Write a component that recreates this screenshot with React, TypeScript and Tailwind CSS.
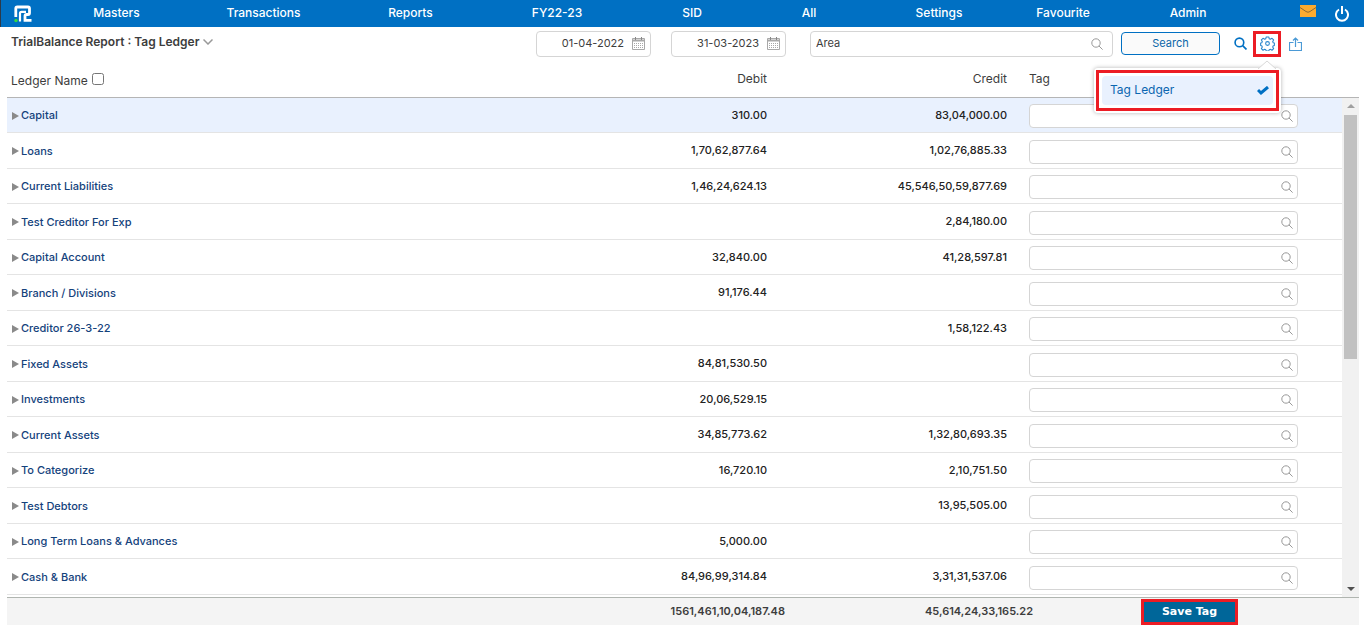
import { ReactNode, useState } from "react";

type Ledger = { name: string; debit?: string; credit?: string };

const menu = [
  "Masters",
  "Transactions",
  "Reports",
  "FY22-23",
  "SID",
  "All",
  "Settings",
  "Favourite",
  "Admin",
];

const ledgers: Ledger[] = [
  { name: "Capital", debit: "310.00", credit: "83,04,000.00" },
  { name: "Loans", debit: "1,70,62,877.64", credit: "1,02,76,885.33" },
  { name: "Current Liabilities", debit: "1,46,24,624.13", credit: "45,546,50,59,877.69" },
  { name: "Test Creditor For Exp", credit: "2,84,180.00" },
  { name: "Capital Account", debit: "32,840.00", credit: "41,28,597.81" },
  { name: "Branch / Divisions", debit: "91,176.44" },
  { name: "Creditor 26-3-22", credit: "1,58,122.43" },
  { name: "Fixed Assets", debit: "84,81,530.50" },
  { name: "Investments", debit: "20,06,529.15" },
  { name: "Current Assets", debit: "34,85,773.62", credit: "1,32,80,693.35" },
  { name: "To Categorize", debit: "16,720.10", credit: "2,10,751.50" },
  { name: "Test Debtors", credit: "13,95,505.00" },
  { name: "Long Term Loans & Advances", debit: "5,000.00" },
  { name: "Cash & Bank", debit: "84,96,99,314.84", credit: "3,31,31,537.06" },
];

const Magnifier = ({ className }: { className: string }) => (
  <svg viewBox="0 0 12 12" className={className} fill="none" stroke="currentColor">
    <circle cx="5" cy="5" r="4.200" />
    <path d="M8 8l3.600 3.600" />
  </svg>
);

const Logo = () => (
  <svg viewBox="0 0 18 18" className="h-[18px] w-[18px]" fill="none" stroke="white" strokeWidth="2.800">
    <path d="M1.800 12V3.500Q1.800 2 3.300 2H14Q15.500 2 15.500 3.500V8Q15.500 9.500 14 9.500H12.500Q11 9.500 11 11V15.300H17.500" />
    <path d="M12 6.800H7.500Q6 6.800 6 8.300V16.500" strokeWidth="2.200" />
    <circle cx="2" cy="15.500" r="1.700" fill="#35d840" stroke="none" />
  </svg>
);

const Calendar = () => (
  <svg viewBox="0 0 13 13" className="h-[13px] w-[13px]" fill="none" stroke="#a8a8a8">
    <path d="M.5 1.500h12v11H.5z" />
    <path d="M1 3.500h11" strokeWidth="2" />
    <path d="M3.500 0v3M9.500 0v3" stroke="#888" />
    <path d="M2 6.500h9M2 8.500h9M2 10.500h9" strokeDasharray="1 1" />
  </svg>
);

const Gear = () => (
  <svg viewBox="0 0 24 24" className="h-[15px] w-[15px]" fill="none" stroke="currentColor" strokeWidth="1.700">
    <circle cx="12" cy="12" r="3" />
    <path
      d="M10 1.500h4l.8 2.900 1.700.8 2.700-1.500 2.600 2.600-1.500 2.700.8 1.700 1.900.5v4l-2 .6-.7 1.700 1.500 2.700-2.600 2.600-2.700-1.500-1.700.7-.8 2h-4l-.8-2-1.700-.7-2.700 1.500-2.600-2.600 1.500-2.700-.7-1.700-2-.6v-4l1.900-.5.8-1.700-1.500-2.700 2.600-2.600 2.700 1.500 1.700-.8z"
      strokeLinejoin="round"
    />
  </svg>
);

const DateField = ({ label, value }: { label: string; value: string }) => (
  <label className="flex h-[26px] w-[115px] items-center gap-2 rounded border border-[#d5d5d5] pl-1 pr-[5px]">
    <input
      aria-label={label}
      defaultValue={value}
      className="w-full min-w-0 text-right text-[11px] outline-none"
    />
    <span className="shrink-0">
      <Calendar />
    </span>
  </label>
);

const Columns = () => (
  <colgroup>
    <col />
    <col className="w-[140px]" />
    <col className="w-[240px]" />
    <col className="w-[335px]" />
  </colgroup>
);

const Amount = ({ children }: { children: ReactNode }) => (
  <td className="text-right text-[11px] font-medium text-[#222]">{children}</td>
);

const App = () => {
  const [area, setArea] = useState("Area");

  return (
    <div className="flex h-screen flex-col bg-white font-['Inter',sans-serif] text-[#3d3d3d]">
      <nav className="flex h-[27px] shrink-0 items-center border-l border-[#2b3a4a] bg-[#0070c3] pb-[2px] text-white">
        <a href="#" aria-label="Home" className="w-[42px] pl-[13px] pt-[2px]">
          <Logo />
        </a>
        <div className="grid flex-1 grid-cols-[147fr_147fr_147fr_146fr_124fr_110fr_150fr_98fr_152fr]">
          {menu.map((item) => (
            <a href="#" key={item} className="text-center text-[12px] font-medium leading-[25px]">
              {item}
            </a>
          ))}
        </div>
        <div className="flex w-[100px] items-center justify-end gap-[19px] pr-[15px]">
          <button aria-label="Messages">
            <svg viewBox="0 0 16 12" className="mb-1 h-3 w-4">
              <path d="M0 0h16v12H0z" fill="#fcab30" />
              <path d="M0 2.500l6 4q2 1.500 4 0l6-4" fill="none" stroke="#8d6a35" />
            </svg>
          </button>
          <button aria-label="Log out" className="pt-[2px]">
            <svg viewBox="0 0 14 16" className="h-4 w-[14px]" fill="none" stroke="white" strokeWidth="2">
              <path d="M4 3.500a6 6 0 1 0 6 0M7 0v8" />
            </svg>
          </button>
        </div>
      </nav>

      <header className="flex h-[33px] shrink-0 items-center pl-[11px] pr-[62px]">
        <button className="mb-1 flex items-center gap-1 text-[12px] font-semibold">
          TrialBalance Report : Tag Ledger
          <svg viewBox="0 0 10 6" className="h-[6px] w-[10px]" fill="none" stroke="#999" strokeWidth="1.500">
            <path d="M.5.5L5 5 9.500.5" />
          </svg>
        </button>
        <div className="ml-auto flex items-center gap-5">
          <DateField label="From date" value="01-04-2022" />
          <DateField label="To date" value="31-03-2023" />
        </div>
        <label className="ml-6 flex h-[26px] w-[303px] items-center rounded border border-[#d5d5d5] px-[5px]">
          <input
            aria-label="Area"
            value={area}
            onChange={(e) => setArea(e.target.value)}
            className="min-w-0 flex-1 text-[11px] outline-none"
          />
          <Magnifier className="mr-1 h-3 w-3 text-[#999]" />
        </label>
        <button className="ml-2 h-[23px] w-[99px] rounded border border-[#0070c3] bg-[#fafafa] text-[11px] text-[#0b66a8]">
          Search
        </button>
        <button aria-label="Find" className="ml-[14px] text-[#0070c3]">
          <svg viewBox="0 0 12 12" className="h-[13px] w-[13px]" fill="none" stroke="currentColor" strokeWidth="1.500">
            <circle cx="5" cy="5" r="4" />
            <path d="M8 8l3.500 3.500" />
          </svg>
        </button>
        <div className="relative ml-[6px]">
          <button
            aria-label="Options"
            className="flex h-[26px] w-7 items-center justify-center border-[3px] border-[#ec1c24] text-[#2b86cc]"
          >
            <Gear />
          </button>
          {/* options menu under the gear */}
          <div className="absolute right-0 top-[37px] z-10 w-[187px] rounded-sm bg-white p-[2px] shadow-[0_0_4px_rgba(0,0,0,0.3)]">
            <svg viewBox="0 0 18 9" className="absolute -top-[8px] right-[5px] h-[9px] w-[18px]">
              <path d="M0 9L9 1l9 8" fill="white" stroke="#d8d8d8" />
            </svg>
            <div className="border-[3px] border-[#ec1c24] p-[3px]">
              <button className="flex h-[29px] w-full items-center justify-between rounded bg-[#e9f1fe] pl-2 pr-1 text-[12px] text-[#0b66b0]">
                Tag Ledger
                <svg viewBox="0 0 12 9" className="h-[9px] w-3" fill="none" stroke="#0070c3" strokeWidth="3">
                  <path d="M1 4l3 3 7-6" />
                </svg>
              </button>
            </div>
          </div>
        </div>
        <button aria-label="Share" className="ml-2 text-[#4b9ad6]">
          <svg viewBox="0 0 13 14" className="h-[14px] w-[13px]" fill="none" stroke="currentColor" strokeWidth="1.200">
            <path d="M4.500 5.500h-4v8h12v-8h-4M6.500 10V1M4 3.500L6.500 1 9 3.500" />
          </svg>
        </button>
      </header>

      <main className="flex min-h-0 flex-1 flex-col pl-[7px] pr-[5px]">
        <div className="shrink-0 border-b border-[#b5b5b5] pr-[17px]">
          <table className="h-[37px] w-full table-fixed text-[12px]">
            <Columns />
            <thead>
              <tr>
                <th className="pl-1 pt-1 text-left font-normal">
                  <label className="flex items-center gap-1">
                    Ledger Name
                    <input type="checkbox" className="mb-1 h-3 w-3" />
                  </label>
                </th>
                <th className="text-right font-normal">Debit</th>
                <th className="text-right font-normal">Credit</th>
                <th className="pl-[22px] text-left font-normal">Tag</th>
              </tr>
            </thead>
          </table>
        </div>

        <div className="flex min-h-0 flex-1">
          <div className="min-w-0 flex-1 overflow-hidden">
            <table className="h-[497px] w-full table-fixed">
              <Columns />
              <tbody>
                {ledgers.map((ledger, i) => (
                  <tr key={ledger.name} className="border-b border-[#e4e4e4] first:bg-[#e9f1fe]">
                    <td className="pl-[5px] pt-px">
                      <button className="flex items-center gap-[2px] text-[11px] font-medium text-[#14427c]">
                        <svg viewBox="0 0 7 8" className="h-2 w-[7px]">
                          <path d="M0 0l7 4-7 4z" fill="#8a8a8a" />
                        </svg>
                        {ledger.name}
                      </button>
                    </td>
                    <Amount>{ledger.debit}</Amount>
                    <Amount>{ledger.credit}</Amount>
                    <td className="pl-[22px] pr-11 pt-[2px]">
                      <label className="flex h-6 items-center rounded border border-[#d5d5d5] bg-white px-1">
                        <input
                          aria-label={`Tag ${i + 1}`}
                          className="min-w-0 flex-1 text-[11px] outline-none"
                        />
                        <Magnifier className="h-3 w-3 text-[#999]" />
                      </label>
                    </td>
                  </tr>
                ))}
              </tbody>
            </table>
          </div>
          {/* scrollbar */}
          <div className="flex w-[17px] shrink-0 flex-col items-center justify-between bg-[#f1f1f1] px-[2px] py-[6px]">
            <svg viewBox="0 0 8 4" className="h-1 w-2">
              <path d="M0 4l4-4 4 4z" fill="#a0a0a0" />
            </svg>
            <div className="mb-auto mt-[7px] h-1/2 w-full bg-[#c1c1c1]" />
            <svg viewBox="0 0 8 4" className="h-1 w-2">
              <path d="M0 0l4 4 4-4z" fill="#505050" />
            </svg>
          </div>
        </div>

        <footer className="flex h-7 shrink-0 items-center justify-end border-t border-[#b0b5b0] bg-[#f4f4f4] pr-[121px] text-[11px] font-semibold">
          <span>1561,461,10,04,187.48</span>
          <span className="w-[248px] text-right">45,614,24,33,165.22</span>
          <button className="ml-[108px] h-[26px] w-[97px] border-[3px] border-[#ec1c24] bg-[#006699] pt-[2px] font-['DejaVu_Sans',sans-serif] text-[11px] font-bold text-white">
            Save Tag
          </button>
        </footer>
      </main>
    </div>
  );
};

export default App;
